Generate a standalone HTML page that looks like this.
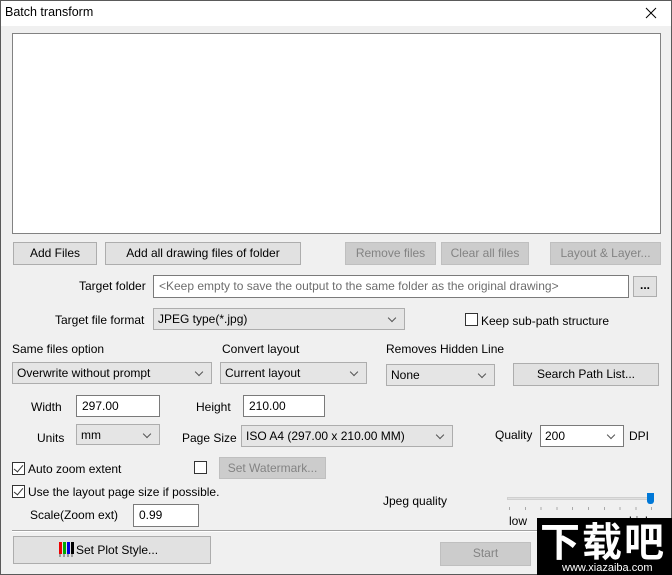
<!DOCTYPE html>
<html><head><meta charset="utf-8"><style>
*{box-sizing:border-box;margin:0;padding:0}
body{width:672px;height:575px;background:#f0f0f0;font-family:"Liberation Sans","Noto Sans CJK SC",sans-serif;font-size:12px;color:#000;position:relative;overflow:hidden}
.a{position:absolute;white-space:nowrap}
.frame{left:0;top:0;width:672px;height:575px;border:1px solid #5a5a5a}
.title{left:1px;top:1px;width:670px;height:25px;background:#fff}
.btn{position:absolute;background:#e1e1e1;border:1px solid #adadad;text-align:center;line-height:21px}
.dis{background:#ccc;border-color:#bfbfbf;color:#838383}
.inp{position:absolute;background:#fff;border:1px solid #7a7a7a;padding-left:5px;line-height:21px}
.sel{position:absolute;background:#e5e5e5;border:1px solid #adadad;padding-left:4px;line-height:21px}
.sel:after{content:"";position:absolute;right:9px;top:6px;width:5px;height:5px;border-right:1px solid #555;border-bottom:1px solid #555;transform:rotate(45deg)}
.wsel{background:#fff;border-color:#7a7a7a}
.cb{position:absolute;width:13px;height:13px;border:1px solid #333;background:#fff}
.cb.on:after{content:"";position:absolute;left:3px;top:0px;width:4px;height:8px;border-right:1.5px solid #333;border-bottom:1.5px solid #333;transform:rotate(40deg)}
</style></head><body>
<div class="a frame"></div>
<div class="a title"></div>
<div class="a" style="left:5px;top:5px;font-size:12.5px">Batch transform</div>
<svg class="a" style="left:645px;top:7px" width="12" height="12"><path d="M1 1L11 11M11 1L1 11" stroke="#000" stroke-width="1"/></svg>
<div class="a" style="left:12px;top:33px;width:649px;height:201px;background:#fff;border:1px solid #828282"></div>

<div class="btn" style="left:13px;top:242px;width:84px;height:23px">Add Files</div>
<div class="btn" style="left:105px;top:242px;width:196px;height:23px">Add all drawing files of folder</div>
<div class="btn dis" style="left:345px;top:242px;width:91px;height:23px">Remove files</div>
<div class="btn dis" style="left:441px;top:242px;width:88px;height:23px">Clear all files</div>
<div class="btn dis" style="left:550px;top:242px;width:111px;height:23px">Layout &amp; Layer...</div>

<div class="a" style="left:79px;top:279px">Target folder</div>
<div class="inp" style="left:153px;top:275px;width:476px;height:23px;color:#6d6d6d">&lt;Keep empty to save the output to the same folder as the original drawing&gt;</div>
<div class="btn" style="left:633px;top:276px;width:24px;height:21px;line-height:17px;font-weight:bold">...</div>

<div class="a" style="left:55px;top:313px">Target file format</div>
<div class="sel" style="left:153px;top:308px;width:252px;height:22px">JPEG type(*.jpg)</div>
<div class="cb" style="left:465px;top:313px"></div>
<div class="a" style="left:481px;top:314px">Keep sub-path structure</div>

<div class="a" style="left:12px;top:342px">Same files option</div>
<div class="a" style="left:222px;top:342px">Convert layout</div>
<div class="a" style="left:386px;top:342px">Removes Hidden Line</div>
<div class="sel" style="left:12px;top:362px;width:200px;height:22px">Overwrite without prompt</div>
<div class="sel" style="left:220px;top:362px;width:147px;height:22px">Current layout</div>
<div class="sel" style="left:386px;top:364px;width:109px;height:22px">None</div>
<div class="btn" style="left:513px;top:363px;width:146px;height:23px">Search Path List...</div>

<div class="a" style="left:31px;top:400px">Width</div>
<div class="inp" style="left:76px;top:395px;width:84px;height:22px">297.00</div>
<div class="a" style="left:196px;top:400px">Height</div>
<div class="inp" style="left:243px;top:395px;width:82px;height:22px">210.00</div>

<div class="a" style="left:37px;top:431px">Units</div>
<div class="sel" style="left:76px;top:424px;width:84px;height:21px">mm</div>
<div class="a" style="left:182px;top:431px">Page Size</div>
<div class="sel" style="left:241px;top:425px;width:212px;height:22px">ISO A4 (297.00 x 210.00 MM)</div>
<div class="a" style="left:495px;top:428px">Quality</div>
<div class="sel wsel" style="left:540px;top:425px;width:84px;height:22px">200</div>
<div class="a" style="left:629px;top:429px">DPI</div>

<div class="cb on" style="left:12px;top:462px"></div>
<div class="a" style="left:28px;top:462px">Auto zoom extent</div>
<div class="cb" style="left:194px;top:461px"></div>
<div class="btn dis" style="left:219px;top:457px;width:107px;height:22px">Set Watermark...</div>
<div class="cb on" style="left:12px;top:485px"></div>
<div class="a" style="left:28px;top:485px">Use the layout page size if possible.</div>
<div class="a" style="left:30px;top:508px">Scale(Zoom ext)</div>
<div class="inp" style="left:133px;top:504px;width:66px;height:23px">0.99</div>

<div class="a" style="left:383px;top:494px">Jpeg quality</div>
<div class="a" style="left:507px;top:497px;width:146px;height:3px;background:#e0e0e0;border:1px solid #d0d0d0"></div>
<div class="a" style="left:647px;top:493px;width:7px;height:11px;background:#0078d7;border-radius:0 0 3px 3px"></div>
<div class="a" style="left:509px;top:507px;width:145px;height:3px;background:repeating-linear-gradient(90deg,#aaa 0 1px,transparent 1px 15.8px)"></div>
<div class="a" style="left:509px;top:514px">low</div>
<div class="a" style="left:629px;top:514px">high</div>

<div class="a" style="left:12px;top:530px;width:649px;height:1px;background:#a0a0a0"></div>
<div class="a" style="left:12px;top:531px;width:649px;height:1px;background:#fff"></div>
<div class="btn" style="left:13px;top:536px;width:198px;height:28px;line-height:26px"></div>
<svg class="a" style="left:59px;top:542px" width="16" height="15"><rect x="0" y="0" width="3" height="12" fill="#e00"/><rect x="4" y="0" width="3" height="12" fill="#0a0"/><rect x="8" y="0" width="3" height="12" fill="#00d"/><rect x="12" y="0" width="3" height="12" fill="#000"/><path d="M1 12V15M5 12V15M9 12V15M13 12V15" stroke="#555"/></svg>
<div class="a" style="left:76px;top:543px">Set Plot Style...</div>
<div class="btn dis" style="left:440px;top:542px;width:91px;height:24px">Start</div>

<div class="a" style="left:537px;top:518px;width:135px;height:57px;background:#000"></div>
<div class="a" style="left:540px;top:514px;color:#fff;font-size:40px;font-weight:bold;letter-spacing:2px;font-family:'Noto Sans CJK SC',sans-serif;line-height:50px">下载吧</div>
<div class="a" style="left:562px;top:562px;color:#fff;font-size:11px;line-height:12px">www.xiazaiba.com</div>
</body></html>
